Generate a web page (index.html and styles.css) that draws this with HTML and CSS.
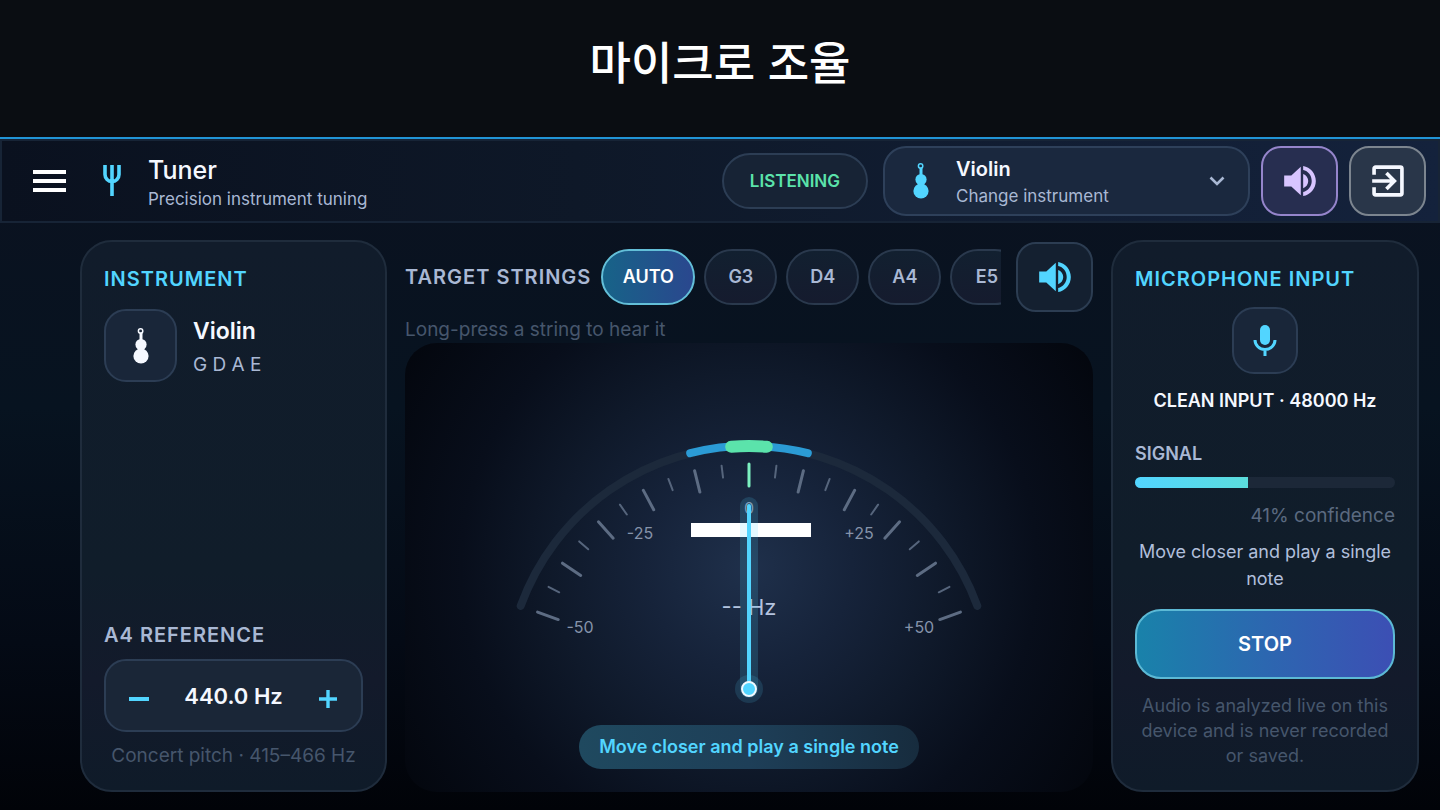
FILE: index.html
```html
<!DOCTYPE html>
<html lang="ko">
<head>
  <meta charset="UTF-8">
  <meta name="viewport" content="width=device-width, initial-scale=1.0">
  <title>마이크로 조율</title>
  <link rel="stylesheet" href="styles.css">
</head>
<body>
  <svg class="sprite" aria-hidden="true">
    <symbol id="icon-violin" viewBox="0 0 16 36">
      <circle cx="7.6" cy="3" r="2.2" fill="none" stroke="currentColor" stroke-width="1.5"/>
      <path d="M6.5 4.5h3V14h-3z" fill="currentColor"/>
      <circle cx="8" cy="16.5" r="5.6" fill="currentColor"/>
      <circle cx="8" cy="28" r="7.6" fill="currentColor"/>
    </symbol>
    <symbol id="icon-volume" viewBox="0 0 24 24">
      <path d="M2 8.500v7h4.500l6 5.500V3L6.500 8.500zM14 7.500v9c1.900-.7 3.200-2.400 3.200-4.500S15.900 8.200 14 7.500zm0-5v2.600c3.100.6 5.400 3.500 5.400 6.900s-2.300 6.300-5.400 6.900v2.600c4.500-.7 8-4.700 8-9.500s-3.500-8.800-8-9.500z" fill="currentColor"/>
    </symbol>
  </svg>

  <h1 class="hero">마이크로 조율</h1>

  <div class="app">
    <header class="topbar">
      <button class="menu-btn" type="button" aria-label="Menu">
        <span></span><span></span><span></span>
      </button>
      <svg class="fork" viewBox="0 0 18 32" aria-hidden="true">
        <path d="M2 0v9.500a7 7 0 0 0 14 0V0M9 0v31" fill="none" stroke="currentColor" stroke-width="3.600"/>
      </svg>
      <div class="brand">
        <h2>Tuner</h2>
        <p>Precision instrument tuning</p>
      </div>
      <span class="status">LISTENING</span>
      <button class="picker" type="button" aria-haspopup="listbox">
        <svg class="violin" aria-hidden="true"><use href="#icon-violin"/></svg>
        <span class="picker-text">
          <strong>Violin</strong>
          <small>Change instrument</small>
        </span>
        <svg class="chevron" viewBox="0 0 16 10" aria-hidden="true">
          <path d="M1.500 1.500L8 8l6.500-6.500" fill="none" stroke="currentColor" stroke-width="2.600"/>
        </svg>
      </button>
      <button class="icon-btn purple" type="button" aria-label="Sound">
        <svg aria-hidden="true"><use href="#icon-volume"/></svg>
      </button>
      <button class="icon-btn grey" type="button" aria-label="Exit">
        <svg viewBox="0 0 24 24" aria-hidden="true">
          <path d="M3.200 8V4.200a1 1 0 0 1 1-1h15.600a1 1 0 0 1 1 1v15.600a1 1 0 0 1-1 1H4.200a1 1 0 0 1-1-1V16M2 12h13.500M11 7l5 5-5 5" fill="none" stroke="currentColor" stroke-width="2.300"/>
        </svg>
      </button>
    </header>

    <main class="layout">
      <section class="card">
        <h3 class="card-title">INSTRUMENT</h3>
        <div class="instrument">
          <span class="tile"><svg class="violin" aria-hidden="true"><use href="#icon-violin"/></svg></span>
          <div class="instrument-text">
            <strong>Violin</strong>
            <p>G D A E</p>
          </div>
        </div>
        <h3 class="label reference-label">A4 REFERENCE</h3>
        <div class="stepper">
          <button type="button" aria-label="Lower pitch"><svg viewBox="0 0 20 20"><path d="M0 10h20" stroke="currentColor" stroke-width="4"/></svg></button>
          <output>440.0 Hz</output>
          <button type="button" aria-label="Raise pitch"><svg viewBox="0 0 20 20"><path d="M1 10h18M10 1v18" stroke="currentColor" stroke-width="3.400"/></svg></button>
        </div>
        <p class="note">Concert pitch · 415–466 Hz</p>
      </section>

      <section class="center">
        <div class="strings">
          <h3 class="label">TARGET STRINGS</h3>
          <div class="chips">
            <button class="chip active" type="button">AUTO</button>
            <button class="chip" type="button">G3</button>
            <button class="chip" type="button">D4</button>
            <button class="chip" type="button">A4</button>
            <button class="chip" type="button">E5</button>
          </div>
          <button class="icon-btn cyan" type="button" aria-label="Play string">
            <svg aria-hidden="true"><use href="#icon-volume"/></svg>
          </button>
        </div>
        <p class="hint">Long-press a string to hear it</p>

        <div class="dial">
          <!-- origin is the needle pivot, 50 cents = 70 degrees -->
          <svg class="gauge" viewBox="-344 -346 688 372" role="img" aria-label="Tuning meter">
            <path class="track" d="M-228.300-83.100A243 243 0 0 1 228.300-83.100"/>
            <path class="near" d="M-58.800-235.800A243 243 0 0 1 58.800-235.800"/>
            <path class="in-tune" d="M-17.800-242.300A243 243 0 0 1 17.800-242.300"/>
            <g id="ticks"></g>
            <rect class="note-bar" x="-58" y="-166" width="120" height="14"/>
            <g class="scale">
              <text x="0" y="-175">0</text>
              <text x="-109" y="-150">-25</text>
              <text x="110" y="-150">+25</text>
              <text x="-169" y="-56">-50</text>
              <text x="170" y="-56">+50</text>
            </g>
            <text class="freq" x="0" y="-74">-- Hz</text>
            <path class="needle-glow" d="M0 0V-183"/>
            <circle class="pivot-glow" r="14"/>
            <path class="needle" d="M0 0V-183"/>
            <circle class="pivot" r="7"/>
          </svg>
          <p class="advice">Move closer and play a single note</p>
        </div>
      </section>

      <section class="card mic">
        <h3 class="card-title">MICROPHONE INPUT</h3>
        <span class="tile mic-tile">
          <svg viewBox="0 0 24 32" aria-hidden="true">
            <rect x="7" y="0" width="10" height="20" rx="5" fill="currentColor"/>
            <path d="M2 15a10 9.500 0 0 0 20 0M12 24.500V31" fill="none" stroke="currentColor" stroke-width="3"/>
          </svg>
        </span>
        <p class="input-info">CLEAN INPUT · 48000 Hz</p>
        <h4 class="signal-label">SIGNAL</h4>
        <div class="signal"><div class="signal-fill" style="width: 43.6%"></div></div>
        <p class="confidence">41% confidence</p>
        <p class="mic-advice">Move closer and play a single note</p>
        <button class="stop" type="button">STOP</button>
        <p class="note privacy">Audio is analyzed live on this device and is never recorded or saved.</p>
      </section>
    </main>
  </div>

  <script>
    // Draw the tick marks, one every 5 cents
    const ticks = document.getElementById('ticks');
    for (let cents = -50; cents <= 50; cents += 5) {
      const major = cents % 10 === 0;
      const line = document.createElementNS('http://www.w3.org/2000/svg', 'line');
      line.setAttribute('y1', -225);
      line.setAttribute('y2', major ? -203 : -213);
      line.setAttribute('transform', `rotate(${cents * 1.4})`);
      line.setAttribute('class', cents === 0 ? 'tick zero' : major ? 'tick major' : 'tick');
      ticks.appendChild(line);
    }
  </script>
</body>
</html>
```
FILE: styles.css
```css
* {
  box-sizing: border-box;
}

body {
  margin: 0;
  min-height: 100vh;
  display: flex;
  flex-direction: column;
  background: #0a0d12;
  font-family: Inter, 'Noto Sans CJK KR', sans-serif;
  color: #f5f8ff;
}

h1, h2, h3, h4, p {
  margin: 0;
}

button {
  margin: 0;
  padding: 0;
  border: none;
  background: none;
  font-family: inherit;
  color: inherit;
  cursor: pointer;
}

svg {
  display: block;
}

.sprite {
  position: absolute;
  width: 0;
  height: 0;
}

.hero {
  padding: 25px 0 40px;
  font-family: 'Noto Sans CJK KR', sans-serif;
  font-size: 45px;
  font-weight: 500;
  line-height: 72px;
  text-align: center;
  color: #fff;
}

.app {
  flex: 1;
  display: flex;
  flex-direction: column;
  border-top: 2px solid #2194d6;
  background: linear-gradient(#0b1220, #071320 40%, #040a15 75%, #010308);
}

/* Top bar */
.topbar {
  display: flex;
  align-items: center;
  height: 84px;
  padding: 0 12px 0 31px;
  border: 2px solid #172436;
  background: linear-gradient(90deg, #0a111f, #0e1828 40%, #14223c);
}

.menu-btn {
  display: flex;
  flex-direction: column;
  gap: 5px;
  width: 33px;
  margin-right: 37px;
}

.menu-btn span {
  height: 4px;
  background: #fff;
}

.fork {
  width: 18px;
  height: 32px;
  margin-right: 27px;
  color: #52d5ff;
}

.brand {
  flex: 1;
  padding-top: 4px;
}

.brand h2 {
  font-size: 25px;
  font-weight: 500;
  line-height: 32px;
}

.brand p {
  font-size: 17px;
  line-height: 26px;
  color: #a9b8d4;
}

.status {
  padding: 0 26px;
  margin-right: 15px;
  border: 2px solid #2c3d54;
  border-radius: 28px;
  background: #172335;
  font-size: 17px;
  font-weight: 600;
  line-height: 52px;
  color: #5be3ab;
}

.picker {
  display: flex;
  align-items: center;
  width: 367px;
  height: 70px;
  padding: 0 23px 0 28px;
  margin-right: 11px;
  border: 2px solid #2e405a;
  border-radius: 23px;
  background: #1a283e;
  text-align: left;
}

.violin {
  width: 16px;
  height: 36px;
}

.picker .violin {
  color: #52d5ff;
}

.picker-text {
  flex: 1;
  margin-left: 27px;
  padding-top: 4px;
}

.picker strong,
.picker small {
  display: block;
  line-height: 27px;
}

.picker strong {
  font-size: 20px;
  font-weight: 600;
}

.picker small {
  font-size: 17px;
  color: #a9b8d4;
}

.chevron {
  width: 16px;
  height: 10px;
  color: #a9b8d4;
}

.icon-btn {
  display: flex;
  flex: none;
  align-items: center;
  justify-content: center;
  width: 77px;
  height: 70px;
  border: 2px solid #2c3d52;
  border-radius: 20px;
  background: #142030;
}

.icon-btn svg {
  width: 38px;
  height: 38px;
}

.purple {
  margin-right: 11px;
  border-color: #9585cb;
  background: #272e50;
  color: #d8c5ff;
}

.grey {
  border-color: #7c858f;
  background: #293649;
}

.cyan {
  color: #52d5ff;
}

/* Main columns */
.layout {
  flex: 1;
  display: grid;
  grid-template-columns: 307fr 688fr 308fr;
  gap: 18px;
  padding: 17px 21px 18px 80px;
}

.card {
  display: flex;
  flex-direction: column;
  padding: 22px;
  border: 2px solid #1f2c3c;
  border-radius: 32px;
  background: linear-gradient(#111c2b, #101d2a 60%, #131a2b 80%, #0f1b29);
}

.card-title,
.label {
  font-size: 20px;
  font-weight: 600;
  line-height: 28px;
  letter-spacing: 1px;
}

.card-title {
  padding-top: 1px;
  color: #52d5ff;
}

.label {
  color: #a9b8d4;
  white-space: nowrap;
}

.tile {
  display: flex;
  align-items: center;
  justify-content: center;
  width: 73px;
  height: 73px;
  border: 2px solid #2c3d54;
  border-radius: 22px;
  background: #192639;
}

.instrument {
  display: flex;
  align-items: center;
  gap: 16px;
  margin-top: 16px;
}

.instrument-text {
  padding-top: 3px;
}

.instrument strong {
  font-size: 23px;
  font-weight: 600;
  line-height: 36px;
}

.instrument p {
  font-size: 19px;
  line-height: 32px;
  color: #a9b8d4;
}

.reference-label {
  margin-top: auto;
}

.stepper {
  display: flex;
  align-items: center;
  justify-content: space-between;
  height: 73px;
  margin: 10px 0 11px;
  padding: 0 23px;
  border: 2px solid #2c3d54;
  border-radius: 22px;
  background: #1a2637;
}

.stepper output {
  font-size: 22px;
  font-weight: 600;
}

.stepper button {
  padding-top: 6px;
  color: #52d5ff;
}

.stepper svg {
  width: 20px;
  height: 20px;
}

.note {
  font-size: 19px;
  line-height: 25px;
  text-align: center;
  color: #46566c;
}

/* Strings and dial */
.center {
  display: flex;
  flex-direction: column;
  min-width: 0;
}

.strings {
  display: flex;
  align-items: center;
  height: 73px;
}

.chips {
  flex: 1;
  display: flex;
  gap: 9px;
  min-width: 0;
  margin: 0 15px 0 10px;
  overflow: hidden;
}

.chip {
  flex: none;
  width: 73px;
  height: 56px;
  border: 2px solid #2a394d;
  border-radius: 28px;
  background: linear-gradient(#122030, #151b2e);
  font-size: 18px;
  font-weight: 600;
  color: #a9b8d4;
}

.chip.active {
  width: 94px;
  border-color: #63bfd8;
  background: linear-gradient(90deg, #176388, #2a478e);
  color: #fff;
}

.hint {
  padding-top: 4px;
  font-size: 19px;
  line-height: 26px;
  color: #46566c;
}

.dial {
  flex: 1;
  display: flex;
  flex-direction: column;
  align-items: center;
  padding-bottom: 23px;
  border-radius: 32px;
  background: radial-gradient(circle at 50% 50%, #1f304b 0%, #16233a 25%, #0f192a 48%, #080e1b 70%, #03060d 100%);
}

.gauge {
  width: 100%;
}

.track,
.near,
.in-tune {
  fill: none;
  stroke-linecap: round;
  stroke-width: 8;
}

.track {
  stroke: #1c293b;
}

.near {
  stroke: #2b9bd5;
}

.in-tune {
  stroke: #5be3ab;
  stroke-width: 12;
}

.tick {
  stroke: #56657c;
  stroke-width: 2;
  stroke-linecap: round;
}

.tick.major {
  stroke: #5d6c83;
  stroke-width: 3;
}

.tick.zero {
  stroke: #7cf0c0;
  stroke-width: 3;
}

.note-bar {
  fill: #fff;
}

.scale text {
  font-size: 16px;
  text-anchor: middle;
  fill: #8593aa;
}

.freq {
  font-size: 22px;
  text-anchor: middle;
  fill: #b4c3df;
}

.needle,
.needle-glow {
  stroke: #52d5ff;
  stroke-width: 4;
  stroke-linecap: round;
}

.needle-glow {
  stroke-width: 18;
  stroke-opacity: 0.16;
}

.pivot-glow {
  fill: #52d5ff;
  fill-opacity: 0.14;
}

.pivot {
  fill: #52d5ff;
  stroke: #f0faff;
  stroke-width: 2;
}

.advice {
  margin-top: auto;
  padding: 0 20px;
  border-radius: 22px;
  background: linear-gradient(90deg, #1f495f, #1e3f58 50%, #172c3e);
  font-size: 18px;
  font-weight: 600;
  line-height: 44px;
  color: #52d5ff;
}

/* Microphone card */
.mic {
  text-align: center;
}

.mic .card-title {
  text-align: left;
}

.mic-tile {
  align-self: center;
  width: 66px;
  height: 67px;
  margin-top: 14px;
  color: #52d5ff;
}

.mic-tile svg {
  width: 24px;
  height: 32px;
}

.input-info {
  margin-top: 13px;
  font-size: 18px;
  font-weight: 600;
  line-height: 27px;
}

.signal-label {
  margin-top: 26px;
  font-size: 18px;
  font-weight: 600;
  line-height: 27px;
  text-align: left;
  color: #a9b8d4;
}

.signal {
  height: 11px;
  margin-top: 10px;
  border-radius: 6px;
  background: #1c2838;
  overflow: hidden;
}

.signal-fill {
  height: 100%;
  background: linear-gradient(90deg, #52d5ff, #5bdcdc);
}

.confidence {
  margin-top: 14px;
  font-size: 19px;
  line-height: 27px;
  text-align: right;
  color: #5b6a80;
}

.mic-advice {
  margin-top: 9px;
  font-size: 18px;
  line-height: 27px;
  color: #b0bfdb;
}

.stop {
  height: 70px;
  margin-top: 17px;
  border: 2px solid #5cb9d5;
  border-radius: 26px;
  background: linear-gradient(90deg, #1982aa, #2c67b0 50%, #3c4fb4);
  font-size: 20px;
  font-weight: 600;
  color: #fff;
}

.privacy {
  margin-top: auto;
  font-size: 18px;
}
```
